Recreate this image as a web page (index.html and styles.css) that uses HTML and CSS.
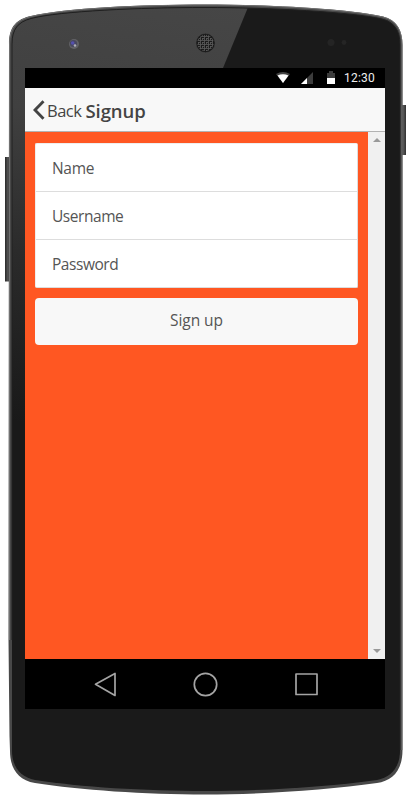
FILE: index.html
```
<!DOCTYPE html>
<html lang="en">
<head>
<meta charset="utf-8">
<title>Signup</title>
<link rel="stylesheet" href="styles.css">
</head>
<body>
<div class="phone">
  <svg class="shell" viewBox="0 0 413 803" aria-hidden="true">
    <defs>
      <linearGradient id="glare" gradientUnits="userSpaceOnUse" x1="200" y1="0" x2="130" y2="440">
        <stop offset="0" stop-color="#464646"/><stop offset=".3" stop-color="#404040"/><stop offset=".62" stop-color="#2b2b2b"/><stop offset="1" stop-color="#191919"/>
      </linearGradient>
      <linearGradient id="side" x1="0" x2="1" y1="0" y2="0">
        <stop offset="0" stop-color="#292929"/><stop offset=".5" stop-color="#555"/><stop offset="1" stop-color="#303030"/>
      </linearGradient>
      <pattern id="mesh" width="4" height="4" patternUnits="userSpaceOnUse">
        <path d="M0 .5H4M.5 0V4M2.5 2V4M2 2.5H4" stroke="#5c5c5c" stroke-width=".8"/>
      </pattern>
      <clipPath id="face">
        <path d="M12 44C12 29 18 22 31 18.5C60 11 140 7.5 205 7.5C270 7.5 352 12 382 19C394 22 400 30 400 45V750C400 768 391 777 377 780C328 787 260 791 205 791C145 791 80 787 35 780C20 777 12 766 12 751Z"/>
      </clipPath>
    </defs>
    <rect x="5" y="157" width="6" height="124.500" fill="url(#side)"/>
    <rect x="401" y="105" width="5" height="50" fill="url(#side)"/>
    <path d="M9 44C9 26 17 19 31 16C65 8 140 4.5 205 4.5C273 4.5 350 9 383 16.500C397 20 402.500 31 402.500 45V750C402.500 771 392 781 377 783C328 790 260 794.500 205 794.500C145 794.500 80 790 35 783C17 780 10 767 10 751L9.500 736L8.500 640Z" fill="#484848"/>
    <path d="M9.500 640V44C9.500 27 17 20 31 16.500C65 8.500 140 5 205 5C273 5 350 9.500 383 17C397 20 402 31 402 45V750" fill="none" stroke="#707070"/>
    <g clip-path="url(#face)">
      <rect width="413" height="803" fill="#1a1a1a"/>
      <path d="M0 0H251L223 68L25 500H0Z" fill="url(#glare)"/>
    </g>
    <path d="M12 640V44C12 29 18 22 31 18.500C60 11 140 7.500 205 7.500C270 7.500 352 12 382 19C394 22 400 30 400 45V750" fill="none" stroke="#202020"/>
    <circle cx="74" cy="44" r="5" fill="#626266"/>
    <circle cx="73.500" cy="43.500" r="3.600" fill="#484860"/>
    <circle cx="72.700" cy="43" r="1.800" fill="#5550ae"/>
    <circle cx="75" cy="45.500" r="1.300" fill="#b0b0b8"/>
    <circle cx="205.500" cy="43" r="9.700" fill="#1b1b1b"/>
    <circle cx="205.500" cy="43" r="8.300" fill="url(#mesh)"/>
    <circle cx="205.500" cy="43" r="9.700" fill="none" stroke="#4a4a4a" stroke-width=".6"/>
    <circle cx="331" cy="42.500" r="3.500" fill="#242424"/>
    <circle cx="344" cy="42.500" r="2.400" fill="#252525"/>
  </svg>
  <main class="screen">
    <div class="status">
      <svg class="signals" viewBox="0 0 64 16" aria-hidden="true">
        <path d="M0 4Q7 0 14 4L7 13Z" fill="#444"/><path d="M1.500 5.500Q7 3 12.500 5.500L7 13Z" fill="#fff"/>
        <path d="M37 2V14H25Z" fill="#3c3c3c"/><path d="M31 8V14H25Z" fill="#fff"/>
        <path d="M51 3H53V1H57V3H59V8H51Z" fill="#3c3c3c"/><path d="M51 8H59V14H51Z" fill="#fff"/>
      </svg>
      <span>12:30</span>
    </div>
    <header class="bar">
      <svg class="chevron" viewBox="0 0 12 20" aria-hidden="true"><path d="M10.500 1.200L2 10L10.500 18.800" fill="none" stroke="#444" stroke-width="2.900"/></svg>
      <span class="back">Back</span>
      <h1>Signup</h1>
    </header>
    <div class="view">
      <form class="content">
        <div class="list">
          <div class="item name">Name</div>
          <div class="item">Username</div>
          <div class="item">Password</div>
        </div>
        <button class="submit" type="button">Sign up</button>
      </form>
      <div class="scroll"><i class="up"></i><i class="down"></i></div>
    </div>
    <nav class="nav">
      <svg viewBox="0 0 360 50" fill="none" stroke="#a4a4a4" stroke-width="1.700" stroke-linejoin="round" aria-hidden="true">
        <path d="M90 14.500V36.500L70.500 25.300Z"/><circle cx="180.500" cy="25.500" r="11.200"/><rect x="271" y="15" width="21" height="20.500"/>
      </svg>
    </nav>
  </main>
</div>
</body>
</html>
```
FILE: styles.css
```
* { box-sizing: border-box; }
body { margin: 0; background: #fff; font-family: "Open Sans", "Noto Sans", sans-serif; color: #444; }
.phone { position: relative; width: 413px; height: 803px; padding: 68px 28px 0 25px; overflow: hidden; }
.shell { position: absolute; left: 0; top: 0; width: 413px; height: 803px; }
.screen { position: relative; display: flex; flex-direction: column; width: 360px; height: 641px; background: #000; }
.status { display: flex; align-items: center; justify-content: flex-end; gap: 4px; height: 20px; padding-right: 10px; color: #eee; font: 12px/20px Roboto, sans-serif; letter-spacing: .2px; }
.signals { width: 64px; height: 16px; }
.bar { display: flex; align-items: center; height: 44px; padding-left: 8px; background: #f8f8f8; border-bottom: 1px solid #b2b2b2; }
.chevron { width: 12px; height: 20px; margin-right: 2px; }
.back { font-size: 16.5px; line-height: 24px; margin: 3px 4px 0 0; letter-spacing: -.5px; }
h1 { margin: 3px 0 0; font-size: 18.5px; line-height: 24px; font-weight: 600; letter-spacing: -.05px; }
.view { display: flex; height: 527px; }
.content { display: flex; flex-direction: column; gap: 10px; width: 343px; padding: 11px 10px; background: #ff5722; }
.list { height: 145px; background: #fff; border: 1px solid #ddd; border-top-color: #eee; border-left-color: #eee; border-radius: 2px; }
.item { height: 48px; padding: 0 16px; font-size: 15.5px; line-height: 49px; letter-spacing: -.45px; color: #555; border-bottom: 1px solid #ddd; }
.name { letter-spacing: -.3px; }
.item:last-child { border-bottom: 0; }
.submit { height: 47px; padding: 0 0 2px; border: 0; border-radius: 4px; background: #f8f8f8; color: #555; font: 15.5px/45px "Open Sans", sans-serif; letter-spacing: -.05px; }
.scroll { display: flex; flex-direction: column; justify-content: space-between; align-items: center; width: 17px; padding: 6px 0; background: #f0f0f0; }
.up, .down { width: 0; height: 0; border-left: 4px solid transparent; border-right: 4px solid transparent; }
.up { border-bottom: 4px solid #999; }
.down { border-top: 4px solid #999; }
.nav { height: 50px; }
.nav svg { display: block; width: 360px; height: 50px; }
```
